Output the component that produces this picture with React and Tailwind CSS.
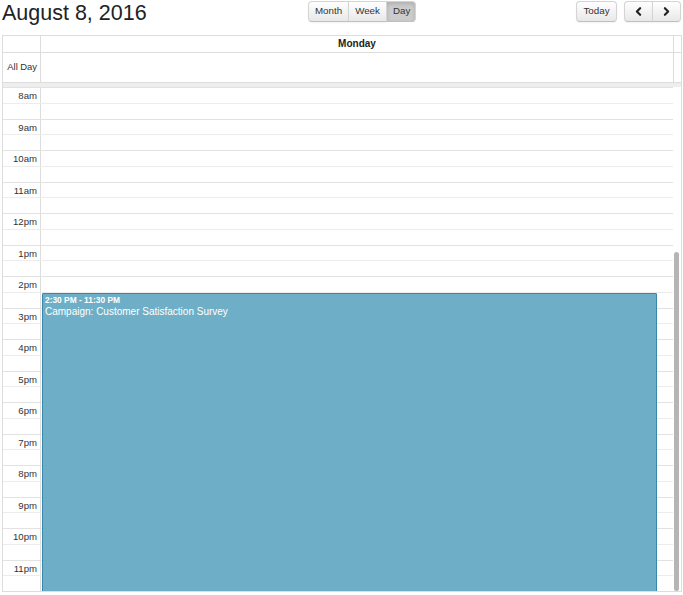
import { ChevronLeft, ChevronRight } from 'lucide-react';

const hours = ['8am', '9am', '10am', '11am', '12pm', '1pm', '2pm', '3pm', '4pm', '5pm', '6pm', '7pm', '8pm', '9pm', '10pm', '11pm'];

const btn =
  'h-[21px] px-[6px] text-[9.75px] text-[#333] border border-[#d4d4d4] border-b-[#bfbfbf] bg-gradient-to-b from-white to-[#e8e8e8] shadow-[0_1px_2px_rgba(0,0,0,0.05)]';

export default function App() {
  return (
    <div className="w-[683px] h-[595px] bg-white overflow-hidden font-['Liberation_Sans',Arial,sans-serif] text-[#333]">
      {/* Toolbar */}
      <div className="h-[35px] flex items-start pt-[1px] pr-[2px]">
        <h2 className="w-[308px] pl-[2px] text-[21.5px] leading-[26px] text-[#222] -mt-[1px]">August 8, 2016</h2>
        <div className="flex">
          <button className={`${btn} w-[41px] rounded-l-[4px]`}>Month</button>
          <button className={`${btn} w-[39px] -ml-[1px]`}>Week</button>
          <button className={`${btn} w-[30px] -ml-[1px] rounded-r-[4px] !bg-none bg-[#cccccc] shadow-[inset_0_2px_4px_rgba(0,0,0,0.15)]`}>Day</button>
        </div>
        <button className={`${btn} ml-auto w-[41px] rounded-[4px]`}>Today</button>
        <div className="flex ml-[7px]">
          <button className={`${btn} w-[29px] rounded-l-[4px] flex items-center justify-center`}>
            <ChevronLeft size={13} strokeWidth={4} color="#222" />
          </button>
          <button className={`${btn} w-[29px] -ml-[1px] rounded-r-[4px] flex items-center justify-center`}>
            <ChevronRight size={13} strokeWidth={4} color="#222" />
          </button>
        </div>
      </div>

      {/* Calendar */}
      <div className="ml-[2px] w-[680px] border border-[#ddd] text-[10px]">
        {/* Day header */}
        <div className="flex h-[17px] border-b border-[#ddd]">
          <div className="w-[38px] border-r border-[#ddd]" />
          <div className="flex-1 text-center font-bold leading-[16px] text-[#222]">Monday</div>
          <div className="w-[8px] border-l border-[#ddd]" />
        </div>
        {/* All day */}
        <div className="flex h-[29px]">
          <div className="w-[38px] border-r border-[#ddd] flex items-center justify-end pr-[3px] text-[9.4px]">All Day</div>
          <div className="flex-1" />
          <div className="w-[8px] border-l border-[#ddd]" />
        </div>
        {/* Divider */}
        <div className="h-[5px] border-t border-[#ddd] bg-[#eeeeee]" />

        {/* Time grid */}
        <div className="flex h-[504px] overflow-hidden">
          <div className="relative flex-1">
            {hours.map((h) => (
              <div key={h}>
                <div className="flex h-[15.75px] border-t border-[#e2e2e2]">
                  <div className="w-[38px] border-r border-[#ddd] text-right pr-[3px] text-[9.6px] leading-[16px]">{h}</div>
                  <div className="flex-1" />
                </div>
                <div className="flex h-[15.75px] border-t border-[#ececec]">
                  <div className="w-[38px] border-r border-[#ddd]" />
                  <div className="flex-1" />
                </div>
              </div>
            ))}

            {/* Event */}
            <div className="absolute left-[39px] top-[206px] w-[615px] h-[320px] bg-[#6eafc7] border border-[#3a87ad] rounded-[1px] px-[2px] text-white">
              <div className="text-[8.4px] font-bold leading-[10px] mt-[1px]">2:30 PM - 11:30 PM</div>
              <div className="text-[10px] leading-[13px]">Campaign: Customer Satisfaction Survey</div>
            </div>
          </div>
          {/* Scrollbar */}
          <div className="w-[8px] pt-[165px] pl-[1px]">
            <div className="w-[5px] h-full rounded-full bg-[#b5b5b5]" />
          </div>
        </div>
      </div>
    </div>
  );
}
